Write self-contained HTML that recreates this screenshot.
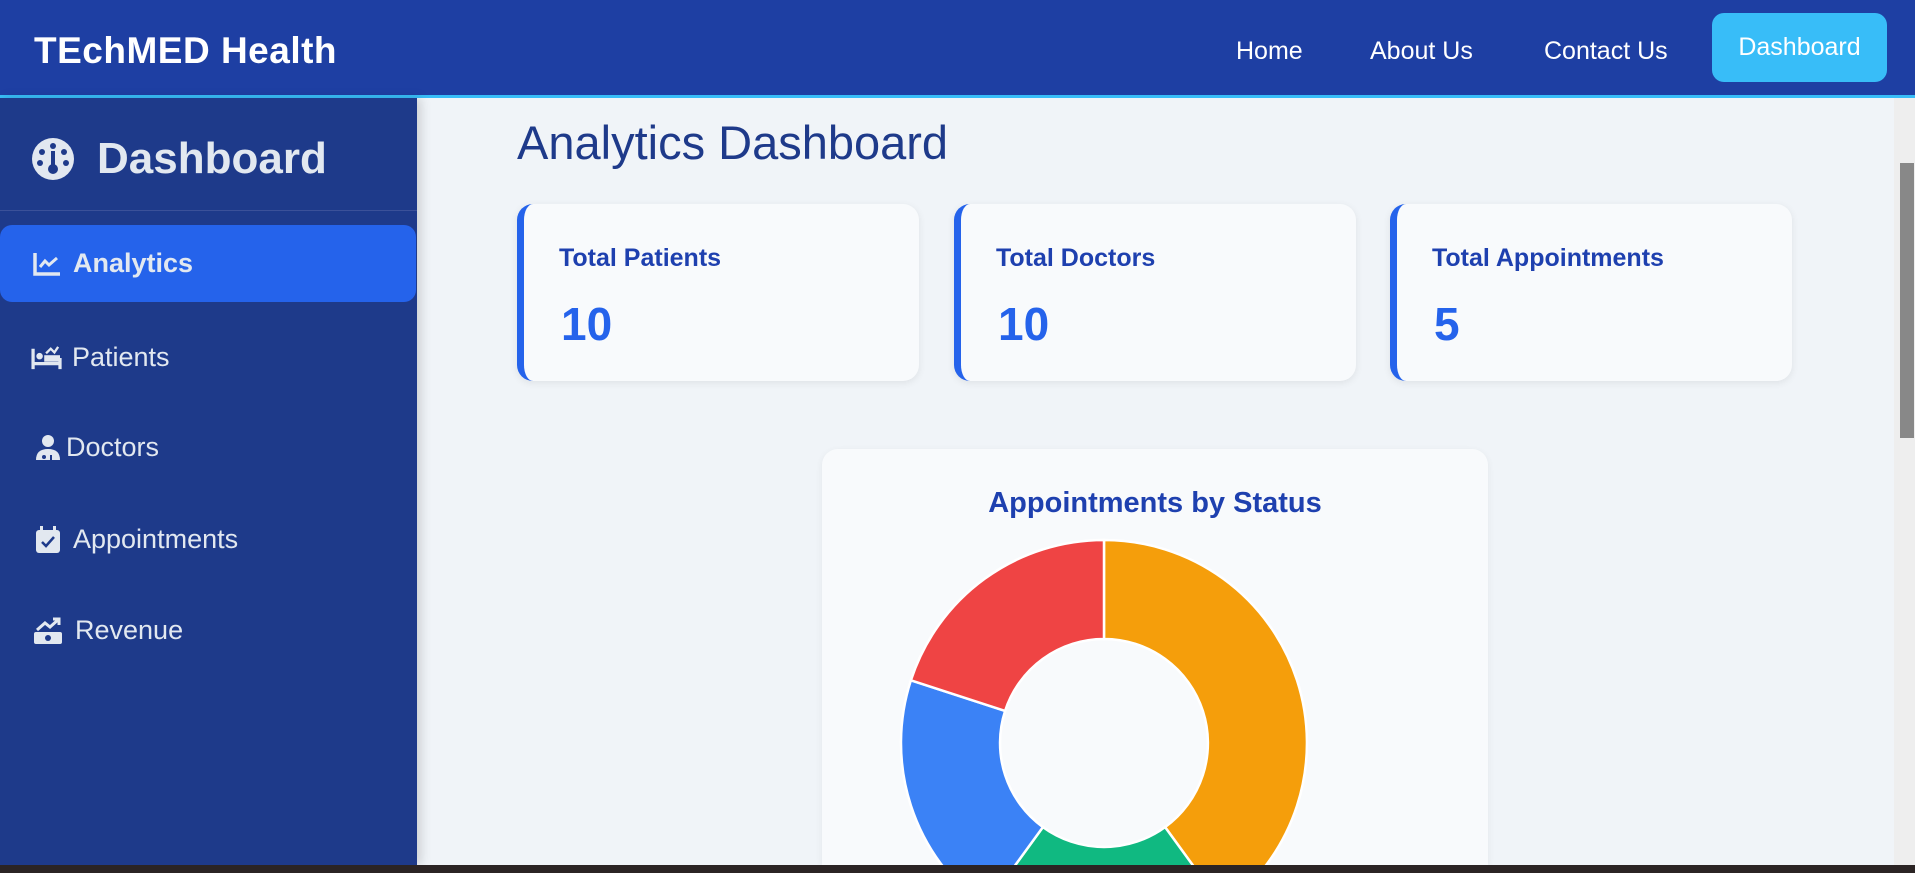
<!DOCTYPE html>
<html><head><meta charset="utf-8"><style>
*{box-sizing:border-box;margin:0;padding:0}
html,body{width:1915px;height:873px;overflow:hidden}
body{background:#f0f4f8;font-family:"Liberation Sans",sans-serif;position:relative}
.hdr{position:absolute;left:0;top:0;width:1915px;height:98px;background:#1e3fa3;border-bottom:3px solid #38bdf8}
.logo{position:absolute;left:34px;top:30px;color:#fff;font-weight:bold;font-size:37px;letter-spacing:0.5px}
.nav{position:absolute;top:37px;color:#fff;font-size:25px}
.btn{position:absolute;left:1712px;top:13px;width:175px;height:69px;background:#38bdf8;border-radius:12px;color:#fff;font-size:25px;text-align:center;line-height:69px}
.side{position:absolute;left:0;top:98px;width:417px;height:767px;background:#1e3a8a;box-shadow:4px 0 10px rgba(0,0,0,.15);z-index:2}
.sh{position:absolute;left:31px;top:36px;color:#e2e8f0;font-weight:bold;font-size:44px;display:flex;align-items:center;gap:22px}
.sep{position:absolute;left:0;top:112px;width:417px;height:1px;background:#3b5199}
.item{position:absolute;left:0;width:416px;height:77px;color:#e2e8f0;font-size:27px;display:flex;align-items:center;padding-left:33px;gap:12px}
.act{background:#2563eb;border-radius:12px;font-weight:bold}
.title{position:absolute;left:517px;top:115px;color:#1e3a8a;font-size:47px}
.card{position:absolute;top:204px;width:402px;height:177px;background:#f8fafc;border-left:7px solid #2563eb;border-radius:16px;box-shadow:0 2px 8px rgba(0,0,0,.08)}
.card .l{position:absolute;left:35px;top:40px;color:#1e40af;font-size:25px;font-weight:bold}
.card .n{position:absolute;left:37px;top:93px;color:#2563eb;font-size:46px;font-weight:bold}
.chart{position:absolute;left:822px;top:449px;width:666px;height:416px;background:#f8fafc;border-radius:16px 16px 0 0;box-shadow:0 2px 8px rgba(0,0,0,.06)}
.ct{position:absolute;left:0;width:666px;top:38px;text-align:center;color:#1e40af;font-size:29px;font-weight:bold}
.sb{position:absolute;left:1894px;top:98px;width:21px;height:767px;background:#eeeeee;z-index:3}
.th{position:absolute;left:1900px;top:163px;width:14px;height:275px;background:#888;z-index:4}
.bot{position:absolute;left:0;top:865px;width:1915px;height:8px;background:#2b2424;z-index:5}
</style></head><body>
<div class="hdr">
<div class="logo">TEchMED Health</div>
<div class="nav" style="left:1236px">Home</div>
<div class="nav" style="left:1370px">About Us</div>
<div class="nav" style="left:1544px">Contact Us</div>
<div class="btn">Dashboard</div>
</div>
<div class="side">
<div class="sh"><svg width="44" height="44" viewBox="0 0 44 44"><circle cx="22" cy="22" r="21" fill="#e2e8f0"/><circle cx="22" cy="9" r="3" fill="#1e3a8a"/><circle cx="11" cy="15" r="3" fill="#1e3a8a"/><circle cx="33" cy="15" r="3" fill="#1e3a8a"/><circle cx="9" cy="26" r="3" fill="#1e3a8a"/><circle cx="35" cy="26" r="3" fill="#1e3a8a"/><rect x="20" y="14" width="4" height="16" fill="#1e3a8a"/><circle cx="22" cy="32" r="5" fill="#1e3a8a"/></svg>Dashboard</div>
<div class="sep"></div>
<div class="item act" style="top:127px"><svg width="28" height="24" viewBox="0 0 28 24"><path d="M2 1V22H27" stroke="#e2e8f0" stroke-width="3.5" fill="none"/><path d="M7 15L12 9L16 13L24 6" stroke="#e2e8f0" stroke-width="3" fill="none"/></svg>Analytics</div>
<div class="item" style="top:221px;padding-left:31px;gap:9px"><svg width="32" height="26" viewBox="0 0 34 28"><path d="M2 4V26M2 20H31V26M31 14V26" stroke="#e2e8f0" stroke-width="3.5" fill="none"/><circle cx="9" cy="12" r="3.5" fill="#e2e8f0"/><rect x="14" y="11" width="17" height="7" fill="#e2e8f0"/><path d="M16 9L21 4L25 8L29 2" stroke="#e2e8f0" stroke-width="2.5" fill="none"/></svg>Patients</div>
<div class="item" style="top:311px;padding-left:36px;gap:6px"><svg width="24" height="28" viewBox="0 0 24 28"><circle cx="12" cy="7" r="6" fill="#e2e8f0"/><path d="M0 26Q0 15 12 15Q24 15 24 26Z" fill="#e2e8f0"/><circle cx="8" cy="23" r="2" fill="#1e3a8a"/><path d="M15 26V21" stroke="#1e3a8a" stroke-width="2"/></svg>Doctors</div>
<div class="item" style="top:403px;padding-left:35px"><svg width="26" height="28" viewBox="0 0 26 28"><rect x="1" y="4" width="24" height="23" rx="3" fill="#e2e8f0"/><rect x="5" y="0" width="3" height="6" fill="#e2e8f0"/><rect x="18" y="0" width="3" height="6" fill="#e2e8f0"/><path d="M7 16L11 20L19 11" stroke="#1e3a8a" stroke-width="2.5" fill="none"/></svg>Appointments</div>
<div class="item" style="top:494px;padding-left:33px"><svg width="30" height="28" viewBox="0 0 30 28"><path d="M4 13L12 6L17 10L26 2M20 2H26V8" stroke="#e2e8f0" stroke-width="3" fill="none"/><rect x="1" y="15" width="28" height="12" rx="2" fill="#e2e8f0"/><circle cx="15" cy="21" r="3" fill="#1e3a8a"/></svg>Revenue</div>
</div>
<div class="title">Analytics Dashboard</div>
<div class="card" style="left:517px"><div class="l">Total Patients</div><div class="n">10</div></div>
<div class="card" style="left:954px"><div class="l">Total Doctors</div><div class="n">10</div></div>
<div class="card" style="left:1390px"><div class="l">Total Appointments</div><div class="n">5</div></div>
<div class="chart"><div class="ct">Appointments by Status</div></div>
<svg style="position:absolute;left:0;top:0" width="1915" height="873">
<g transform="translate(1104,743)" stroke="#fff" stroke-width="2.5">
<path d="M0 -203A203 203 0 0 1 119.3 164.2L61.1 84.1A104 104 0 0 0 0 -104Z" fill="#f59e0b"/>
<path d="M119.3 164.2A203 203 0 0 1 -119.3 164.2L-61.1 84.1A104 104 0 0 0 61.1 84.1Z" fill="#10b981"/>
<path d="M-119.3 164.2A203 203 0 0 1 -193.1 -62.7L-98.9 -32.1A104 104 0 0 0 -61.1 84.1Z" fill="#3b82f6"/>
<path d="M-193.1 -62.7A203 203 0 0 1 0 -203L0 -104A104 104 0 0 0 -98.9 -32.1Z" fill="#ef4444"/>
</g></svg>
<div class="sb"></div><div class="th"></div>
<div class="bot"></div>
</body></html>
